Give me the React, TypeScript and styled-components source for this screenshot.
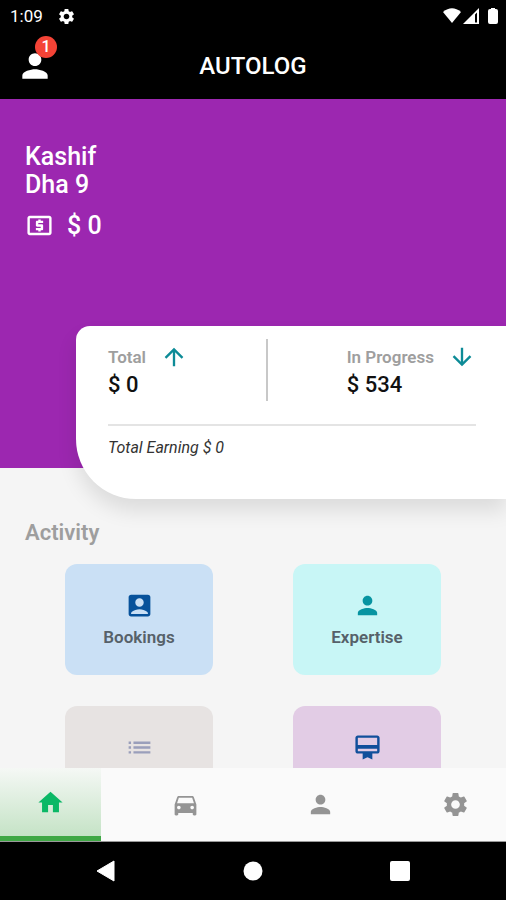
import React from "react";
import styled, { createGlobalStyle } from "styled-components";
import {
  MdAccountBox,
  MdArrowDownward,
  MdArrowUpward,
  MdCardMembership,
  MdDirectionsCar,
  MdHome,
  MdList,
  MdLocalAtm,
  MdPerson,
  MdSettings,
} from "react-icons/md";

const GlobalStyle = createGlobalStyle`
  * { box-sizing: border-box; }
  body {
    margin: 0;
    background: #000;
    font-family: Roboto, "Open Sans", sans-serif;
    font-weight: 500;
  }
  button {
    border: 0;
    padding: 0;
    background: none;
    color: inherit;
    font: inherit;
    cursor: pointer;
  }
  h1, h2, p { margin: 0; font-weight: inherit; }
  svg { display: block; flex: none; }
`;

const Screen = styled.div`
  display: flex;
  flex-direction: column;
  height: 100vh;
  overflow: hidden;
  background: #f5f5f5;
`;

const StatusBar = styled.div`
  display: flex;
  align-items: center;
  justify-content: space-between;
  height: 32px;
  padding: 0 7px 0 10px;
  background: #000;
  color: #fff;
  font-size: 17px;
  font-weight: 400;
`;

const StatusGroup = styled.div`
  display: flex;
  align-items: center;
  gap: 14px;
`;

const AppBar = styled.header`
  display: grid;
  grid-template-columns: 1fr auto 1fr;
  align-items: center;
  height: 67px;
  padding: 0 16px;
  background: #000;
  color: #fff;
`;

const Title = styled.h1`
  font-size: 24px;
  font-weight: 500;
  line-height: 28px;
`;

const ProfileButton = styled.button`
  position: relative;
  justify-self: start;
`;

const Badge = styled.span`
  position: absolute;
  top: -11px;
  right: -3px;
  width: 22px;
  height: 22px;
  border-radius: 50%;
  background: #f44336;
  font-size: 16px;
  line-height: 22px;
  text-align: center;
`;

const Content = styled.main`
  flex: 1;
  min-height: 0;
  overflow: hidden;
`;

const Hero = styled.section`
  padding: 44px 25px 228px;
  background: #9c27b0;
  color: #fff;
  font-size: 25px;
  line-height: 28px;
`;

const Balance = styled.div`
  display: flex;
  align-items: center;
  gap: 13px;
  margin-top: 12px;
`;

const SummaryCard = styled.section`
  position: relative;
  margin: -142px 0 0 76px;
  padding: 13px 30px 40px 32px;
  border-radius: 14px 0 0 60px;
  background: #fff;
  box-shadow: 0 12px 20px rgba(0, 0, 0, 0.1);
`;

const SummaryRow = styled.div`
  display: flex;
  justify-content: space-between;
  padding-bottom: 23px;
  border-bottom: 2px solid #e4e4e4;
`;

const Stat = styled.div`
  padding-top: 4px;
`;

const StatLabel = styled.div`
  display: flex;
  align-items: center;
  gap: 14px;
  color: #9e9e9e;
  font-size: 17px;
  font-weight: 600;
  line-height: 28px;

  svg { color: #0d8b97; }
`;

const StatValue = styled.p`
  color: #111;
  font-size: 22px;
  line-height: 28px;
`;

const Divider = styled.div`
  width: 2px;
  height: 62px;
  background: #c8c8c8;
`;

const Earning = styled.p`
  padding-top: 11px;
  color: #333;
  font-size: 16px;
  font-style: italic;
  font-weight: 400;
  line-height: 22px;
`;

const SectionTitle = styled.h2`
  padding: 20px 25px 0;
  color: #9e9e9e;
  font-size: 22px;
  font-weight: 600;
  line-height: 28px;
`;

const TileGrid = styled.div`
  display: grid;
  grid-template-columns: 1fr 1fr;
  justify-items: center;
  gap: 31px 0;
  padding: 17px 25px;
`;

const Tile = styled.button<{ $bg: string; $tint: string }>`
  display: flex;
  flex-direction: column;
  align-items: center;
  gap: 6px;
  width: 148px;
  height: 111px;
  padding-top: 27px;
  border-radius: 12px;
  background: ${(p) => p.$bg};
  color: #566169;
  font-size: 17px;
  font-weight: 600;
  line-height: 22px;

  svg { color: ${(p) => p.$tint}; }
`;

const TabBar = styled.nav`
  display: flex;
  justify-content: space-between;
  height: 74px;
  background: #fafafa;
  border-bottom: 1px solid #999;
`;

const Tab = styled.button<{ $active?: boolean }>`
  display: flex;
  align-items: center;
  justify-content: center;
  width: 20%;
  border-bottom: ${(p) => (p.$active ? "5px solid #3fa845" : "0")};
  background: ${(p) => (p.$active ? "linear-gradient(#f5f8f5, #c5e3c6)" : "none")};
  color: ${(p) => (p.$active ? "#0bb866" : "#949494")};
`;

const SystemBar = styled.div`
  display: flex;
  align-items: center;
  justify-content: space-between;
  height: 58px;
  padding: 0 19%;
  background: #000;
`;

const tiles = [
  { label: "Bookings", icon: MdAccountBox, bg: "#cae0f5", tint: "#07529b" },
  { label: "Expertise", icon: MdPerson, bg: "#c8f6f6", tint: "#0794a1" },
  { label: "", name: "List", icon: MdList, bg: "#e7e3e2", tint: "#9a9fbb" },
  { label: "", name: "Membership", icon: MdCardMembership, bg: "#e2cce5", tint: "#114f9b" },
];

const tabs = [
  { name: "Home", icon: MdHome },
  { name: "Vehicles", icon: MdDirectionsCar },
  { name: "Profile", icon: MdPerson },
  { name: "Settings", icon: MdSettings },
];

const SignalIcons = () => (
  <svg width="56" height="18" viewBox="0 0 56 18" fill="#fff" aria-hidden="true">
    <path d="M0 5Q9-2.5 18 5L9 16Z" />
    <path fillRule="evenodd" d="M20 17L36 1V17ZM32 7.5V15.5H34V5.5Z" />
    <path d="M48 1h4v1h1q2 0 2 2v11q0 2-2 2h-6q-2 0-2-2V4q0-2 2-2h1z" />
  </svg>
);

export default function App() {
  return (
    <>
      <GlobalStyle />
      <Screen>
        <StatusBar>
          <StatusGroup>
            <span>1:09</span>
            <MdSettings size={19} />
          </StatusGroup>
          <SignalIcons />
        </StatusBar>
        <AppBar>
          <ProfileButton aria-label="Profile, 1 notification">
            <MdPerson size={38} />
            <Badge>1</Badge>
          </ProfileButton>
          <Title>AUTOLOG</Title>
        </AppBar>
        <Content>
          <Hero>
            <p>Kashif</p>
            <p>Dha 9</p>
            <Balance>
              <MdLocalAtm size={29} />
              <span>$ 0</span>
            </Balance>
          </Hero>
          <SummaryCard>
            <SummaryRow>
              <Stat>
                <StatLabel>
                  Total <MdArrowUpward size={28} />
                </StatLabel>
                <StatValue>$ 0</StatValue>
              </Stat>
              <Divider />
              <Stat>
                <StatLabel>
                  In Progress <MdArrowDownward size={28} />
                </StatLabel>
                <StatValue>$ 534</StatValue>
              </Stat>
            </SummaryRow>
            <Earning>Total Earning $ 0</Earning>
          </SummaryCard>
          <SectionTitle>Activity</SectionTitle>
          <TileGrid>
            {tiles.map(({ label, name, icon: Icon, bg, tint }) => (
              <Tile key={label || name} aria-label={label || name} $bg={bg} $tint={tint}>
                <Icon size={29} />
                {label}
              </Tile>
            ))}
          </TileGrid>
        </Content>
        <TabBar>
          {tabs.map(({ name, icon: Icon }, i) => (
            <Tab key={name} aria-label={name} $active={i === 0}>
              <Icon size={29} />
            </Tab>
          ))}
        </TabBar>
        <SystemBar>
          <button aria-label="Back">
            <svg width="20" height="22" viewBox="0 0 20 22" fill="#fff">
              <path d="M1 11L18 1V21Z" stroke="#fff" strokeLinejoin="round" />
            </svg>
          </button>
          <button aria-label="Home screen">
            <svg width="20" height="20" viewBox="0 0 20 20" fill="#fff">
              <circle cx="10" cy="10" r="9.5" />
            </svg>
          </button>
          <button aria-label="Recent apps">
            <svg width="20" height="20" viewBox="0 0 20 20" fill="#fff">
              <rect width="20" height="20" rx="2" />
            </svg>
          </button>
        </SystemBar>
      </Screen>
    </>
  );
}
